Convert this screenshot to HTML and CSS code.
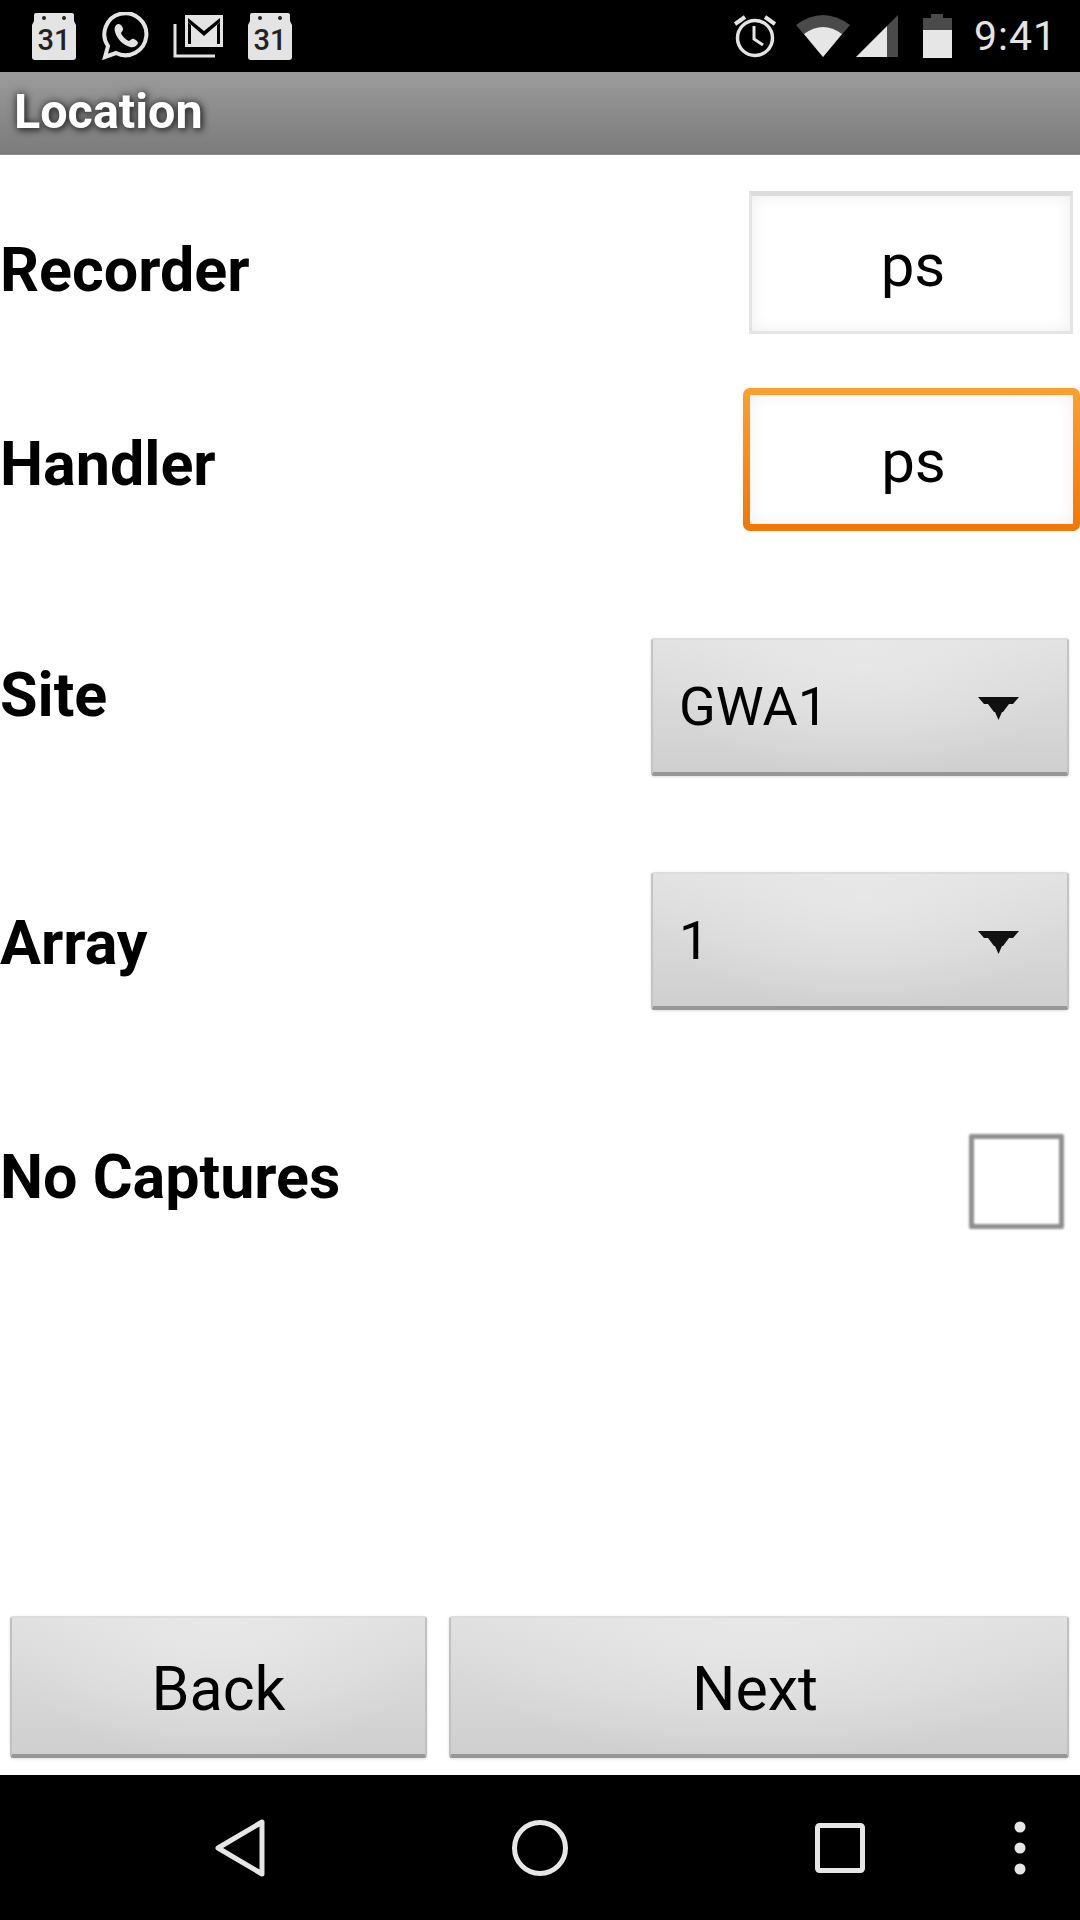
FILE: index.html
```html
<!DOCTYPE html>
<html>
<head>
  <title>Location</title>
  <link rel="stylesheet" href="styles.css">
</head>
<body>
  <div class="status-bar">
    <div class="status-left">
      <svg class="ic-cal" width="46" height="47" viewBox="0 0 46 47">
        <path fill="#e4e4e4" d="M5 0H41Q43 0 43 2V8L45 12V44Q45 47 42 47H4Q1 47 1 44V12L3 8V2Q3 0 5 0Z"/>
        <circle cx="13" cy="5" r="2" fill="#222"/><circle cx="33" cy="5" r="2" fill="#222"/>
        <text x="23" y="37" text-anchor="middle" class="cal-num">31</text>
      </svg>
      <svg class="ic-wa" width="48" height="48" viewBox="0 0 48 48">
        <path fill="none" stroke="#e4e4e4" stroke-width="4" d="M4 45L7 34A21 21 0 1 1 15 41Z"/>
        <path fill="#e4e4e4" d="M17 12C14 13 13 16 14 20C16 27 22 33 29 35C33 36 36 34 37 31C37 29 32 26 31 27L28 29C25 28 21 24 20 21L22 18C23 17 20 11 17 12Z"/>
      </svg>
      <svg class="ic-mail" width="50" height="43" viewBox="0 0 50 43">
        <path fill="#e4e4e4" d="M12 0H50V32H12Z"/>
        <path fill="#000" d="M15 3L31 16L47 3V7L31 21L15 7Z"/>
        <path fill="#000" d="M15 7L18 10V29H15ZM47 7L44 10V29H47Z"/>
        <path fill="none" stroke="#e4e4e4" stroke-width="3" d="M2 9V41H42"/>
      </svg>
      <svg class="ic-cal" width="46" height="47" viewBox="0 0 46 47">
        <path fill="#e4e4e4" d="M5 0H41Q43 0 43 2V8L45 12V44Q45 47 42 47H4Q1 47 1 44V12L3 8V2Q3 0 5 0Z"/>
        <circle cx="13" cy="5" r="2" fill="#222"/><circle cx="33" cy="5" r="2" fill="#222"/>
        <text x="23" y="37" text-anchor="middle" class="cal-num">31</text>
      </svg>
    </div>
    <div class="status-right">
      <svg class="ic-alarm" width="42" height="44" viewBox="0 0 42 44">
        <circle cx="21" cy="24" r="17.5" fill="none" stroke="#e4e4e4" stroke-width="3.5"/>
        <path fill="none" stroke="#e4e4e4" stroke-width="3" d="M20 12V25L29 31"/>
        <path fill="none" stroke="#e4e4e4" stroke-width="4" d="M1 10L11 3M41 10L31 3"/>
      </svg>
      <svg class="ic-wifi" width="54" height="44" viewBox="0 0 54 44">
        <path fill="#4a4a4a" d="M0 11Q27 -9 54 11L27 43Z"/>
        <path fill="#e6e6e6" d="M8 20Q27 6 46 20L27 43Z"/>
      </svg>
      <svg class="ic-signal" width="42" height="43" viewBox="0 0 42 43">
        <path fill="#4a4a4a" d="M42 0V42H31V11Z"/>
        <path fill="#e6e6e6" d="M31 11V42H0Z"/>
      </svg>
      <svg class="ic-battery" width="29" height="44" viewBox="0 0 29 44">
        <path fill="#4a4a4a" d="M8 0H20V4H29V17H0V4H8Z"/>
        <path fill="#e6e6e6" d="M0 16H29V44H0Z"/>
      </svg>
      <span class="clock">9:41</span>
    </div>
  </div>

  <div class="title-bar">Location</div>

  <div class="form">
    <div class="row row-recorder">
      <div class="label">Recorder</div>
      <div class="field">ps</div>
    </div>
    <div class="row row-handler">
      <div class="label">Handler</div>
      <div class="field field-focus">ps</div>
    </div>
    <div class="row row-site">
      <div class="label">Site</div>
      <div class="spinner">
        <span>GWA1</span>
        <svg width="41" height="24" viewBox="0 0 41 24"><path fill="#111" d="M0 0H41L35 7H31L25 15H24L20.500 23L17 15H16L10 7H6Z"/></svg>
      </div>
    </div>
    <div class="row row-array">
      <div class="label">Array</div>
      <div class="spinner">
        <span>1</span>
        <svg width="41" height="24" viewBox="0 0 41 24"><path fill="#111" d="M0 0H41L35 7H31L25 15H24L20.500 23L17 15H16L10 7H6Z"/></svg>
      </div>
    </div>
    <div class="row row-captures">
      <div class="label">No Captures</div>
      <div class="checkbox"></div>
    </div>
  </div>

  <div class="buttons">
    <div class="btn btn-back">Back</div>
    <div class="btn btn-next">Next</div>
  </div>

  <div class="nav-bar">
    <div class="nav-slot">
      <svg width="50" height="58" viewBox="0 0 50 58"><path fill="none" stroke="#e6e6e6" stroke-width="5" stroke-linejoin="round" d="M47 3V55L3 29Z"/></svg>
    </div>
    <div class="nav-slot">
      <svg width="58" height="58" viewBox="0 0 58 58"><circle cx="29" cy="29" r="25.5" fill="none" stroke="#e6e6e6" stroke-width="5"/></svg>
    </div>
    <div class="nav-slot">
      <svg width="50" height="50" viewBox="0 0 50 50"><rect x="2.5" y="2.5" width="45" height="45" rx="2" fill="none" stroke="#e6e6e6" stroke-width="5"/></svg>
    </div>
    <div class="nav-slot nav-more">
      <svg width="12" height="54" viewBox="0 0 12 54"><circle cx="6" cy="6" r="5.5" fill="#e6e6e6"/><circle cx="6" cy="27" r="5.5" fill="#e6e6e6"/><circle cx="6" cy="48" r="5.5" fill="#e6e6e6"/></svg>
    </div>
  </div>
</body>
</html>
```

FILE: styles.css
```css
* {
  box-sizing: border-box;
}

body {
  margin: 0;
  width: 1080px;
  height: 1920px;
  display: flex;
  flex-direction: column;
  background-color: #fff;
  color: #000;
  font-family: Roboto, "Liberation Sans", sans-serif;
  overflow: hidden;
}

/* status bar */
.status-bar {
  height: 72px;
  background-color: #000;
  display: flex;
  justify-content: space-between;
  align-items: center;
  padding: 0 23px 0 31px;
}

.status-left,
.status-right {
  display: flex;
  align-items: center;
}

.status-left {
  gap: 24px;
}

.cal-num {
  font-family: Roboto, sans-serif;
  font-size: 29px;
  font-weight: 500;
  fill: #222;
}

.ic-alarm {
  margin-right: 20px;
}

.ic-wifi {
  margin-right: 6px;
}

.ic-signal {
  margin-right: 25px;
}

.ic-battery {
  margin-right: 22px;
}

.clock {
  font-size: 41px;
  color: #e4e4e4;
  letter-spacing: 1px;
}

/* title */
.title-bar {
  height: 83px;
  padding: 12px 0 0 14px;
  background: linear-gradient(#9b9b9b, #7b7b7b);
  border-bottom: 1px solid #888;
  color: #fff;
  font-size: 48.500px;
  font-weight: 700;
  line-height: 56px;
  text-shadow: 0 0 8px #333, 2px 2px 6px #333;
}

/* form rows */
.form {
  flex: 1;
  display: flex;
  flex-direction: column;
}

.row {
  display: flex;
  justify-content: space-between;
  align-items: center;
}

.row-recorder {
  margin-top: 36px;
  padding-right: 7px;
}

.row-handler {
  margin-top: 54px;
}

.row-site {
  margin-top: 107px;
  padding-right: 11px;
}

.row-array {
  margin-top: 96px;
  padding-right: 11px;
}

.row-captures {
  margin-top: 124px;
  padding-right: 16px;
}

.label {
  font-size: 61px;
  font-weight: 700;
  filter: blur(0.500px);
}

.row-recorder .label {
  margin-top: 15px;
}

.row-handler .label {
  margin-top: 8px;
}

.row-site .label {
  margin-bottom: 24px;
}

.row-array .label {
  margin-top: 3px;
}

.row-captures .label {
  margin-bottom: 10px;
}

.field {
  width: 324px;
  height: 143px;
  padding: 3px 0 0 4px;
  border: 3px solid #e4e4e4;
  border-top: 5px solid #dcdcdc;
  background-color: #fff;
  box-shadow: inset 0 0 16px #eee;
  display: flex;
  align-items: center;
  justify-content: center;
  font-size: 60px;
  filter: blur(0.500px);
}

.field-focus {
  width: 337px;
  height: 143px;
  border: 7px solid transparent;
  border-radius: 7px;
  background: linear-gradient(#fff, #fff) padding-box, linear-gradient(#fd9f30, #f27605) border-box;
}

.spinner {
  width: 418px;
  height: 138px;
  padding: 0 48px 0 26px;
  display: flex;
  justify-content: space-between;
  align-items: center;
  font-size: 54px;
  background: radial-gradient(ellipse at 50% 0, #e8e8e8, rgba(232, 232, 232, 0) 75%), linear-gradient(#e2e2e2, #cfcfcf);
  border: 2px solid #c4c4c4;
  border-top-color: #dcdcdc;
  border-bottom: 4px solid #979797;
  border-radius: 3px;
  box-shadow: 0 1px 3px #ddd;
  filter: blur(0.500px);
}

.spinner svg {
  margin-top: 5px;
}

.checkbox {
  width: 95px;
  height: 95px;
  border: 5px solid #8f8f8f;
  border-radius: 2px;
  background-color: #fff;
  filter: blur(0.800px);
}

/* bottom buttons */
.buttons {
  display: flex;
  gap: 22px;
  padding: 0 11px 17px 10px;
}

.btn {
  height: 142px;
  padding-top: 5px;
  display: flex;
  align-items: center;
  justify-content: center;
  font-size: 61px;
  background: radial-gradient(ellipse at 50% 0, #e8e8e8, rgba(232, 232, 232, 0) 75%), linear-gradient(#e0e0e0, #cfcfcf);
  border: 2px solid #c0c0c0;
  border-top-color: #dcdcdc;
  border-bottom: 4px solid #979797;
  border-radius: 3px;
  box-shadow: 0 1px 3px #ddd;
  filter: blur(0.500px);
}

.btn-back {
  width: 417px;
}

.btn-next {
  width: 620px;
  padding-right: 8px;
}

/* nav bar */
.nav-bar {
  height: 145px;
  background-color: #000;
  display: flex;
  align-items: center;
  padding-left: 90px;
}

.nav-slot {
  width: 300px;
  display: flex;
  justify-content: center;
}

.nav-more {
  width: 60px;
}
```
